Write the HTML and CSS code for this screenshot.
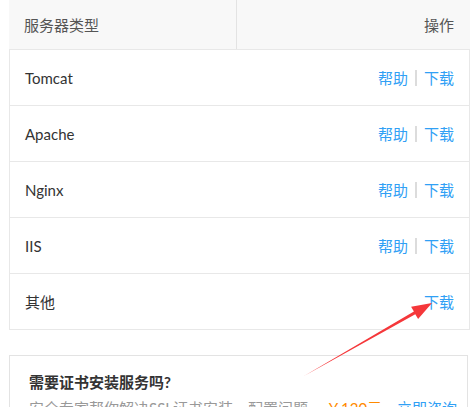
FILE: index.html
```html
<!DOCTYPE html>
<html lang="zh">
<head>
<meta charset="utf-8">
<link rel="stylesheet" href="styles.css">
</head>
<body>
<div class="page">
  <div class="table">
    <div class="thead">
      <div class="th th-name">服务器类型</div>
      <div class="th th-op">操作</div>
    </div>
    <div class="tbody">
      <div class="row"><span class="name">Tomcat</span><span class="ops"><a class="link">帮助</a><i class="sep"></i><a class="link">下载</a></span></div>
      <div class="row"><span class="name">Apache</span><span class="ops"><a class="link">帮助</a><i class="sep"></i><a class="link">下载</a></span></div>
      <div class="row"><span class="name">Nginx</span><span class="ops"><a class="link">帮助</a><i class="sep"></i><a class="link">下载</a></span></div>
      <div class="row"><span class="name">IIS</span><span class="ops"><a class="link">帮助</a><i class="sep"></i><a class="link">下载</a></span></div>
      <div class="row"><span class="name">其他</span><span class="ops"><a class="link">下载</a></span></div>
    </div>
  </div>
  <div class="service">
    <div class="service-title">需要证书安装服务吗?</div>
    <div class="service-desc">安全专家帮你解决SSL证书安装、配置问题<span class="price">￥120元</span><a class="link consult">立即咨询</a></div>
  </div>
  <svg class="arrow" width="472" height="407" viewBox="0 0 472 407">
    <polygon points="304,376 413.9,311.6 411.1,306.8 432,303 418.1,319 415.3,314.2" fill="#f5373a"/>
  </svg>
</div>
</body>
</html>
```
FILE: styles.css
```css
html, body {
  margin: 0;
  padding: 0;
  background: #fff;
}
body {
  font-family: "Lato", "Noto Sans CJK SC", sans-serif;
  font-size: 15px;
  color: #333;
}
.page {
  position: relative;
  width: 472px;
  height: 407px;
  overflow: hidden;
}
.table {
  margin-left: 9px;
  width: 461px;
}
.thead {
  display: flex;
  height: 49px;
  background: #f8f8f8;
}
.th {
  display: flex;
  align-items: center;
  color: #555;
  font-size: 15px;
}
.th-name {
  width: 212px;
  padding-left: 15px;
  border-right: 1px solid #e3e3e3;
}
.th-op {
  flex: 1;
  justify-content: flex-end;
  padding-right: 16px;
}
.tbody {
  border: 1px solid #e8e8e8;
}
.row {
  display: flex;
  align-items: center;
  justify-content: space-between;
  height: 55px;
  padding: 0 15px 0 15px;
  border-bottom: 1px solid #e8e8e8;
}
.row:last-child {
  border-bottom: none;
}
.name {
  color: #333;
}
.ops {
  display: flex;
  align-items: center;
}
.link {
  color: #30a0f5;
  text-decoration: none;
}
.sep {
  display: inline-block;
  width: 2px;
  height: 16px;
  background: #dcdcdc;
  margin: 0 7px 0 7px;
}
.service {
  margin: 25px 0 0 9px;
  width: 459px;
  height: 80px;
  border: 1px solid #e3e3e3;
  padding: 15px 0 0 19px;
  box-sizing: border-box;
}
.service-title {
  font-size: 15px;
  font-weight: bold;
  color: #333;
  line-height: 22px;
}
.service-desc {
  margin-top: 5px;
  color: #999;
  font-size: 15px;
  line-height: 20px;
  white-space: nowrap;
}
.price {
  color: #ff8a00;
  margin-left: 18px;
}
.consult {
  margin-left: 15px;
}
.arrow {
  position: absolute;
  left: 0;
  top: 0;
  pointer-events: none;
}
```
